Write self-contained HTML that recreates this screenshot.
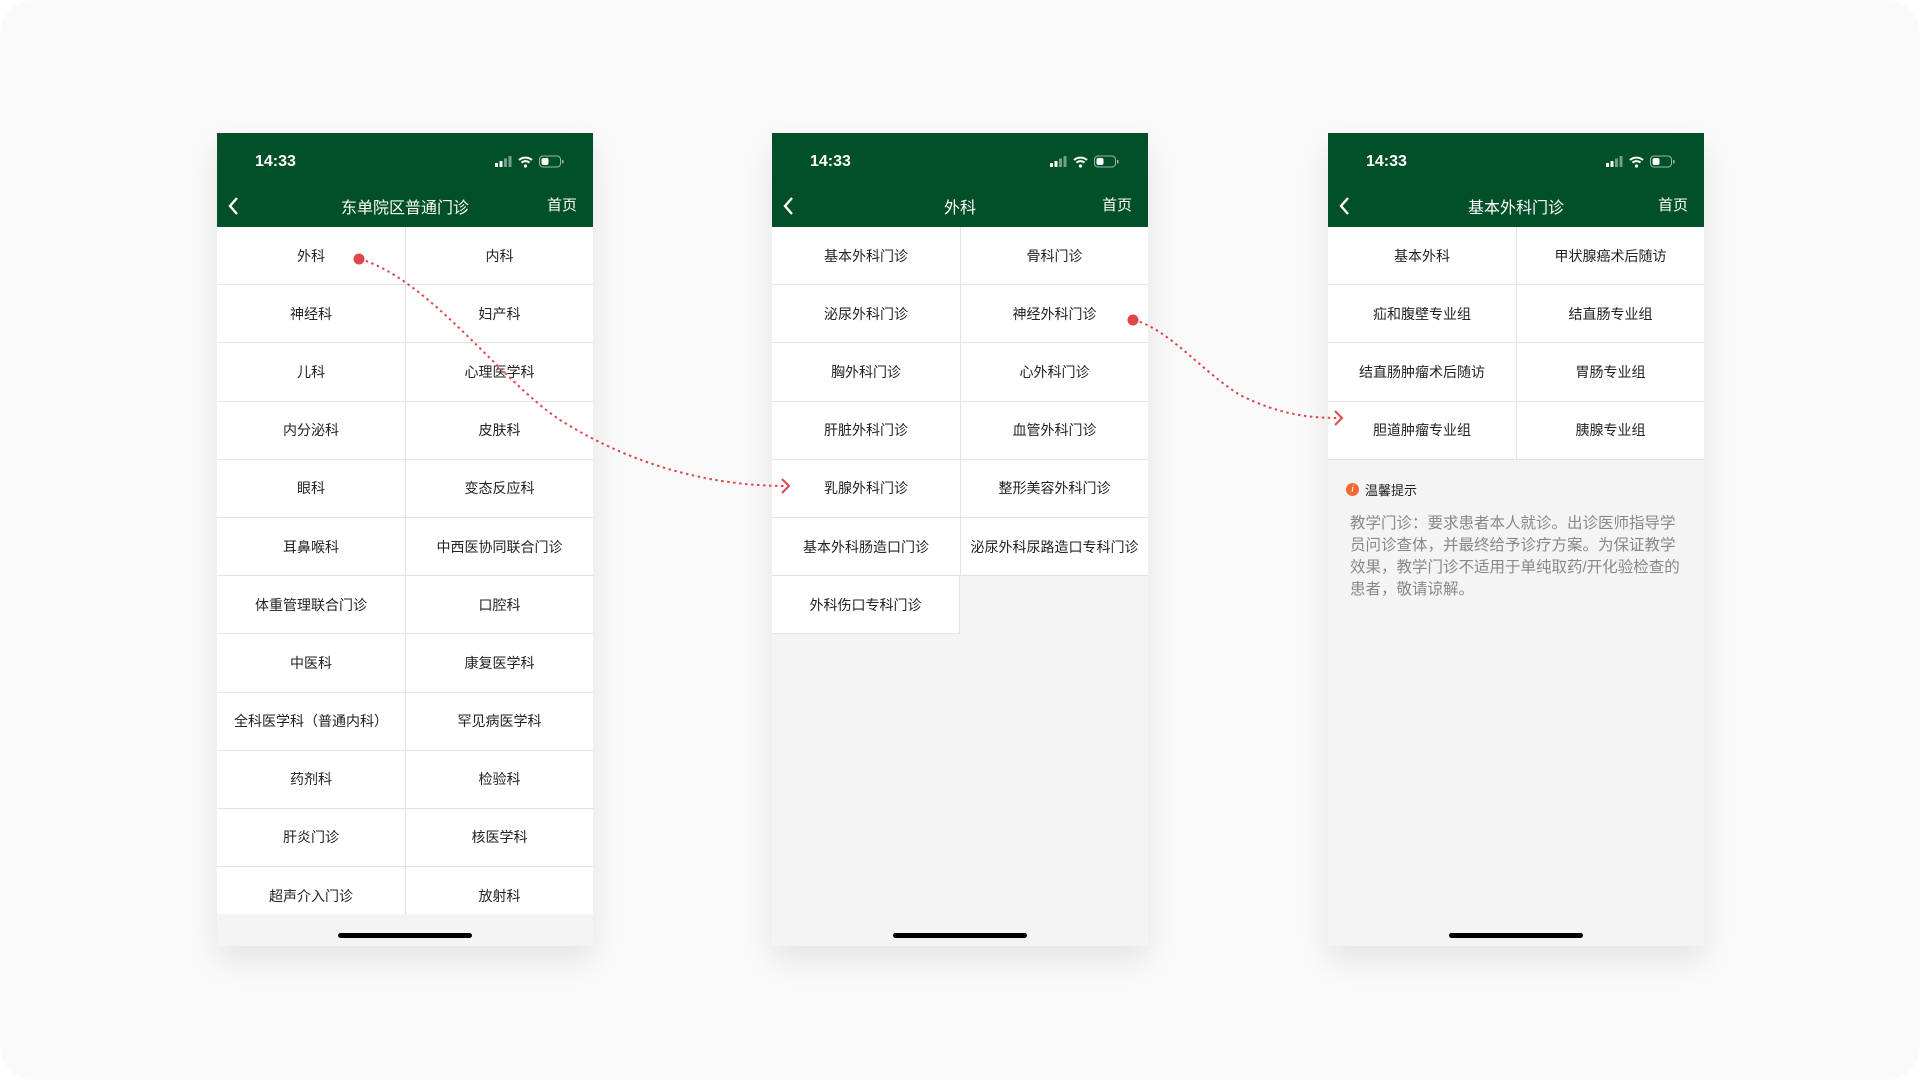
<!DOCTYPE html>
<html><head><meta charset="utf-8"><style>
*{margin:0;padding:0;box-sizing:border-box}
body{width:1920px;height:1080px;background:#fff;position:relative;overflow:hidden;font-family:"Liberation Sans","Noto Sans CJK SC",sans-serif}
.bg{position:absolute;left:0;top:0;width:1920px;height:1080px;background:#fafafa;border-radius:34px}
.ph{position:absolute;top:133px;width:376px;height:813px;background:#f4f4f4;box-shadow:0 14px 30px rgba(0,0,0,.09);overflow:hidden}
.hd{position:absolute;left:0;top:0;width:376px;height:94px;background:#02502a;color:#fff}
.tm{position:absolute;left:38px;top:20px;font-size:16px;font-weight:bold}
.ic{position:absolute;left:278px;top:22px}
.ttl{position:absolute;left:0;width:376px;top:61px;text-align:center;font-size:16px}
.home{position:absolute;right:16px;top:61px;font-size:15px}
.bk{position:absolute;left:10px;top:63px}
.list{position:absolute;left:0;top:94px;width:376px}
.row{display:flex;height:58.2px;border-bottom:1px solid #e3e3e3}
.c{width:188px;background:#fff;display:flex;align-items:center;justify-content:center;font-size:14px;color:#222}
.c+.c{border-left:1px solid #e3e3e3}
.c.e{background:transparent}
.bar{position:absolute;left:121px;top:800px;width:134px;height:5px;border-radius:3px;background:#000}
.tip{position:absolute;left:18px;top:347px;font-size:13px;color:#222;display:flex;align-items:center}
.tip i{display:inline-block;width:13px;height:13px;border-radius:50%;background:#f26a33;color:#fff;font-size:10px;text-align:center;line-height:13px;margin-right:6px;font-style:italic}
.tx{position:absolute;left:22px;top:380px;width:336px;font-size:15.5px;line-height:22px;color:#888}
</style></head><body>
<div class="bg"></div>

<div class="ph" style="left:217px">
 <div class="hd"><div class="tm">14:33</div>
  <svg class="ic" width="90" height="14" viewBox="0 0 90 14"><rect x="0" y="8" width="3" height="4" fill="#fff"/><rect x="4.5" y="6" width="3" height="6" fill="#fff"/><rect x="9" y="3.5" width="3" height="8.5" fill="#fff" opacity=".45"/><rect x="13.5" y="1" width="3" height="11" fill="#fff" opacity=".45"/><path d="M24 5a10 10 0 0 1 13 0M26.5 7.6a6 6 0 0 1 8 0" stroke="#fff" stroke-width="2" fill="none"/><circle cx="30.5" cy="11" r="1.6" fill="#fff"/><rect x="44.5" y="1" width="21" height="11" rx="3.5" stroke="#fff" stroke-opacity=".6" fill="none"/><rect x="46.5" y="3" width="7" height="7" rx="2" fill="#fff"/><rect x="67" y="5" width="1.5" height="3.5" fill="#fff" opacity=".6"/></svg>
  <svg class="bk" width="14" height="20" viewBox="0 0 14 20"><path d="M10 2L3 10l7 8" stroke="#fff" stroke-width="2.4" fill="none"/></svg>
  <div class="ttl">东单院区普通门诊</div><div class="home">首页</div></div>
 <div class="list">
  <div class="row"><div class="c">外科</div><div class="c">内科</div></div>
  <div class="row"><div class="c">神经科</div><div class="c">妇产科</div></div>
  <div class="row"><div class="c">儿科</div><div class="c">心理医学科</div></div>
  <div class="row"><div class="c">内分泌科</div><div class="c">皮肤科</div></div>
  <div class="row"><div class="c">眼科</div><div class="c">变态反应科</div></div>
  <div class="row"><div class="c">耳鼻喉科</div><div class="c">中西医协同联合门诊</div></div>
  <div class="row"><div class="c">体重管理联合门诊</div><div class="c">口腔科</div></div>
  <div class="row"><div class="c">中医科</div><div class="c">康复医学科</div></div>
  <div class="row"><div class="c">全科医学科（普通内科）</div><div class="c">罕见病医学科</div></div>
  <div class="row"><div class="c">药剂科</div><div class="c">检验科</div></div>
  <div class="row"><div class="c">肝炎门诊</div><div class="c">核医学科</div></div>
  <div class="row"><div class="c">超声介入门诊</div><div class="c">放射科</div></div>
 </div>
 <div style="position:absolute;left:0;top:781px;width:376px;height:32px;background:#f4f4f4"></div>
 <div class="bar"></div>
</div>

<div class="ph" style="left:772px">
 <div class="hd"><div class="tm">14:33</div>
  <svg class="ic" width="90" height="14" viewBox="0 0 90 14"><rect x="0" y="8" width="3" height="4" fill="#fff"/><rect x="4.5" y="6" width="3" height="6" fill="#fff"/><rect x="9" y="3.5" width="3" height="8.5" fill="#fff" opacity=".45"/><rect x="13.5" y="1" width="3" height="11" fill="#fff" opacity=".45"/><path d="M24 5a10 10 0 0 1 13 0M26.5 7.6a6 6 0 0 1 8 0" stroke="#fff" stroke-width="2" fill="none"/><circle cx="30.5" cy="11" r="1.6" fill="#fff"/><rect x="44.5" y="1" width="21" height="11" rx="3.5" stroke="#fff" stroke-opacity=".6" fill="none"/><rect x="46.5" y="3" width="7" height="7" rx="2" fill="#fff"/><rect x="67" y="5" width="1.5" height="3.5" fill="#fff" opacity=".6"/></svg>
  <svg class="bk" width="14" height="20" viewBox="0 0 14 20"><path d="M10 2L3 10l7 8" stroke="#fff" stroke-width="2.4" fill="none"/></svg>
  <div class="ttl">外科</div><div class="home">首页</div></div>
 <div class="list">
  <div class="row"><div class="c">基本外科门诊</div><div class="c">骨科门诊</div></div>
  <div class="row"><div class="c">泌尿外科门诊</div><div class="c">神经外科门诊</div></div>
  <div class="row"><div class="c">胸外科门诊</div><div class="c">心外科门诊</div></div>
  <div class="row"><div class="c">肝脏外科门诊</div><div class="c">血管外科门诊</div></div>
  <div class="row"><div class="c">乳腺外科门诊</div><div class="c">整形美容外科门诊</div></div>
  <div class="row"><div class="c">基本外科肠造口门诊</div><div class="c">泌尿外科尿路造口专科门诊</div></div>
  <div class="row" style="border:none"><div class="c" style="border-bottom:1px solid #e3e3e3;border-right:1px solid #e3e3e3">外科伤口专科门诊</div><div class="c e" style="border-left:none"></div></div>
 </div>
 <div class="bar"></div>
</div>

<div class="ph" style="left:1328px">
 <div class="hd"><div class="tm">14:33</div>
  <svg class="ic" width="90" height="14" viewBox="0 0 90 14"><rect x="0" y="8" width="3" height="4" fill="#fff"/><rect x="4.5" y="6" width="3" height="6" fill="#fff"/><rect x="9" y="3.5" width="3" height="8.5" fill="#fff" opacity=".45"/><rect x="13.5" y="1" width="3" height="11" fill="#fff" opacity=".45"/><path d="M24 5a10 10 0 0 1 13 0M26.5 7.6a6 6 0 0 1 8 0" stroke="#fff" stroke-width="2" fill="none"/><circle cx="30.5" cy="11" r="1.6" fill="#fff"/><rect x="44.5" y="1" width="21" height="11" rx="3.5" stroke="#fff" stroke-opacity=".6" fill="none"/><rect x="46.5" y="3" width="7" height="7" rx="2" fill="#fff"/><rect x="67" y="5" width="1.5" height="3.5" fill="#fff" opacity=".6"/></svg>
  <svg class="bk" width="14" height="20" viewBox="0 0 14 20"><path d="M10 2L3 10l7 8" stroke="#fff" stroke-width="2.4" fill="none"/></svg>
  <div class="ttl">基本外科门诊</div><div class="home">首页</div></div>
 <div class="list">
  <div class="row"><div class="c">基本外科</div><div class="c">甲状腺癌术后随访</div></div>
  <div class="row"><div class="c">疝和腹壁专业组</div><div class="c">结直肠专业组</div></div>
  <div class="row"><div class="c">结直肠肿瘤术后随访</div><div class="c">胃肠专业组</div></div>
  <div class="row"><div class="c">胆道肿瘤专业组</div><div class="c">胰腺专业组</div></div>
 </div>
 <div class="tip"><i>i</i>温馨提示</div>
 <div class="tx">教学门诊：要求患者本人就诊。出诊医师指导学员问诊查体，并最终给予诊疗方案。为保证教学效果，教学门诊不适用于单纯取药/开化验检查的患者，敬请谅解。</div>
 <div class="bar"></div>
</div>

<svg style="position:absolute;left:0;top:0" width="1920" height="1080">
 <g fill="none" stroke="#e0474c" stroke-width="2" stroke-dasharray="2.5 3.5">
  <path d="M360 259 C430 280 500 380 560 420 C640 470 720 486 786 486"/>
  <path d="M1134 320 C1170 330 1200 370 1240 395 C1280 415 1310 418 1340 418"/>
 </g>
 <g fill="none" stroke="#e0474c" stroke-width="2"><path d="M782 479l7 7-7 7"/><path d="M1335 411l7 7-7 7"/></g>
 <circle cx="359" cy="259" r="5.5" fill="#e0474c"/>
 <circle cx="1133" cy="320" r="5.5" fill="#e0474c"/>
</svg>
</body></html>
